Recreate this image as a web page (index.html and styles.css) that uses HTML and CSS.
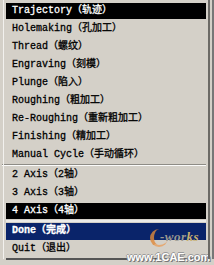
FILE: index.html
```html
<!DOCTYPE html>
<html>
<head>
<meta charset="utf-8">
<link rel="stylesheet" href="styles.css">
</head>
<body>
<div class="frame">
  <div class="list">
    <div class="item hl">Trajectory（轨迹）</div>
    <div class="item">Holemaking（孔加工）</div>
    <div class="item">Thread（螺纹）</div>
    <div class="item">Engraving（刻模）</div>
    <div class="item">Plunge（陷入）</div>
    <div class="item">Roughing（粗加工）</div>
    <div class="item">Re-Roughing（重新粗加工）</div>
    <div class="item">Finishing（精加工）</div>
    <div class="item">Manual Cycle（手动循环）</div>
    <div class="sep"></div>
    <div class="item">2 Axis（2轴）</div>
    <div class="item">3 Axis（3轴）</div>
    <div class="item hl">4 Axis（4轴）</div>
    <div class="gap"></div>
    <div class="item done">Done（完成）</div>
    <div class="item">Quit（退出）</div>
  </div>
  <div class="logo"><span class="swoosh"></span><span class="wk">-wor<b>ks</b></span></div>
  <div class="wm">www.1CAE.com</div>
</div>
</body>
</html>
```
FILE: styles.css
```css
html, body {
  margin: 0;
  padding: 0;
  background: #d4d0c8;
}
.frame {
  position: relative;
  width: 214px;
  height: 265px;
  box-sizing: border-box;
  background: #d4d0c8;
  padding: 2px 8px 0 6px;
  overflow: hidden;
}
.frame::before {
  content: "";
  position: absolute;
  left: 3px;
  top: 0;
  bottom: 6px;
  width: 1px;
  background: #f2f1ee;
}
.frame::after {
  content: "";
  position: absolute;
  right: 4px;
  top: 0;
  bottom: 6px;
  width: 2px;
  background: #6c6a66;
  box-shadow: 4px 0 0 #777;
}
.list {
  display: flex;
  flex-direction: column;
  border-bottom: 2px solid #555;
  width: 200px;
}
.item {
  height: 18px;
  line-height: 18px;
  padding-left: 6px;
  font-family: "Liberation Mono", "Noto Sans CJK SC", monospace;
  font-size: 10px;
  color: #000;
  -webkit-text-stroke: 0.3px currentColor;
  white-space: nowrap;
  box-sizing: border-box;
}
.item.hl {
  background: #000;
  color: #fff;
  border-top: 1px solid #d4d0c8;
  border-bottom: 1px solid #d4d0c8;
  line-height: 16px;
}
.item.done {
  background: #0a246a;
  color: #fff;
  font-weight: bold;
  border-top: 1px solid #d4d0c8;
  line-height: 16px;
}
.sep {
  height: 2px;
  margin-left: -4px;
  border-top: 1px solid #8e8c86;
  border-bottom: 1px solid #fbfbfa;
  box-sizing: border-box;
}
.gap {
  height: 2px;
  background: #ecebe7;
}
.logo {
  position: absolute;
  left: 148px;
  top: 226px;
  width: 60px;
  height: 22px;
}
.swoosh {
  position: absolute;
  left: 2px;
  top: 3px;
  width: 14px;
  height: 16px;
  border-radius: 50%;
  border-left: 4px solid #e08a3a;
  border-bottom: 2px solid #e8a060;
  opacity: 0.8;
}
.wk {
  position: absolute;
  left: 12px;
  top: 3px;
  font-family: "Liberation Serif", serif;
  font-style: italic;
  font-weight: bold;
  font-size: 13px;
  color: #9a9890;
  letter-spacing: 0.5px;
}
.wk b {
  color: #c8b070;
}
.wm {
  position: absolute;
  left: 127px;
  top: 251px;
  font-family: "Liberation Sans", sans-serif;
  font-weight: bold;
  font-size: 11px;
  color: #fff;
  text-shadow: 1px 1px 0 #777, -1px 0 0 #999, 0 -1px 0 #999;
}
```
